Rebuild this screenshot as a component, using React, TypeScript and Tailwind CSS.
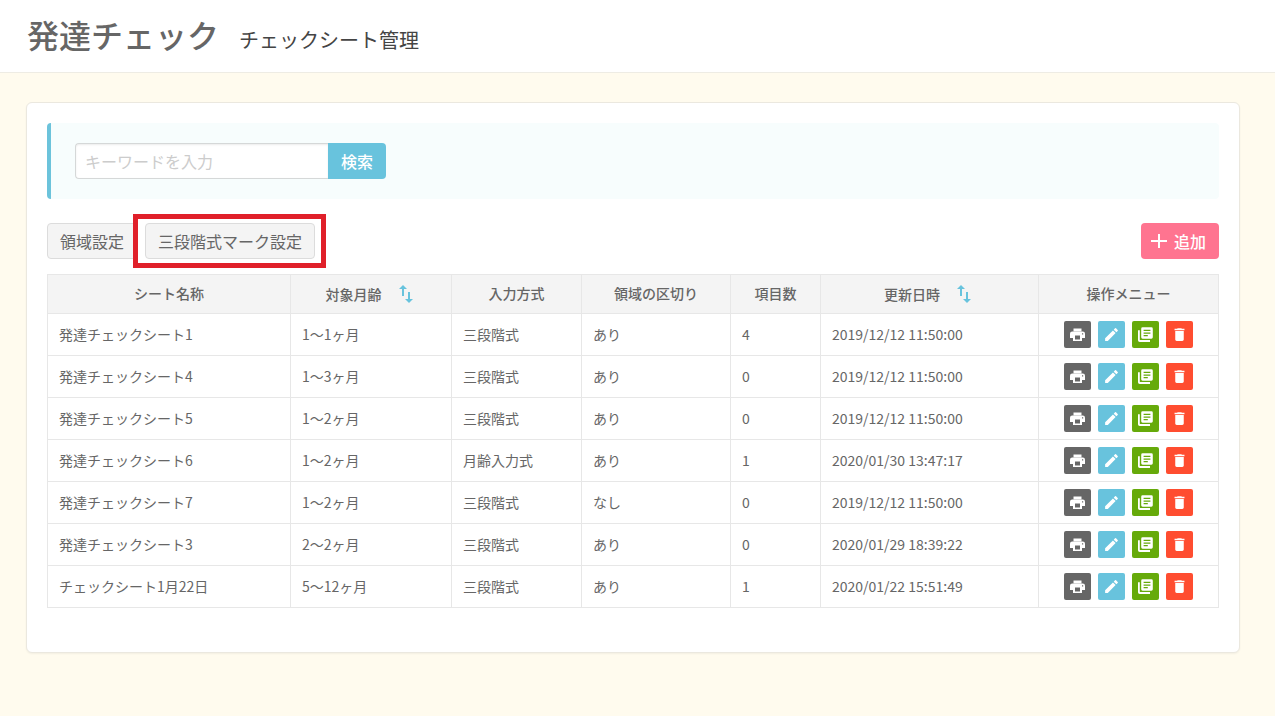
import type { ReactNode } from 'react';
import { MdDelete, MdEdit } from 'react-icons/md';

type Sheet = {
  name: string;
  age: string;
  method: string;
  division: string;
  count: number;
  updated: string;
};

const sheets: Sheet[] = [
  { name: '発達チェックシート1', age: '1～1ヶ月', method: '三段階式', division: 'あり', count: 4, updated: '2019/12/12 11:50:00' },
  { name: '発達チェックシート4', age: '1～3ヶ月', method: '三段階式', division: 'あり', count: 0, updated: '2019/12/12 11:50:00' },
  { name: '発達チェックシート5', age: '1～2ヶ月', method: '三段階式', division: 'あり', count: 0, updated: '2019/12/12 11:50:00' },
  { name: '発達チェックシート6', age: '1～2ヶ月', method: '月齢入力式', division: 'あり', count: 1, updated: '2020/01/30 13:47:17' },
  { name: '発達チェックシート7', age: '1～2ヶ月', method: '三段階式', division: 'なし', count: 0, updated: '2019/12/12 11:50:00' },
  { name: '発達チェックシート3', age: '2～2ヶ月', method: '三段階式', division: 'あり', count: 0, updated: '2020/01/29 18:39:22' },
  { name: 'チェックシート1月22日', age: '5～12ヶ月', method: '三段階式', division: 'あり', count: 1, updated: '2020/01/22 15:51:49' },
];

function PrintIcon() {
  return (
    <svg viewBox="0 0 15 15" className="size-[15px]" fill="currentColor" aria-hidden="true">
      <path d="M3.500 1.500h8v3h-8z" />
      <path
        fillRule="evenodd"
        d="M2.200 4.500h10.600A2.200 2.200 0 0 1 15 6.700V11h-3v3H3v-3H0V6.700a2.200 2.200 0 0 1 2.200-2.200zM5 8.500v4h5v-4zM12 6.200v1.200h1.200V6.200z"
      />
    </svg>
  );
}

function CopyIcon() {
  return (
    <svg viewBox="0 0 15 15" className="size-[15px]" fill="currentColor" aria-hidden="true">
      <path d="M0 3.200h1.800v9.900h10.200V15H1.800A1.800 1.800 0 0 1 0 13.200z" />
      <path
        fillRule="evenodd"
        d="M4.600.3h8.800A1.400 1.400 0 0 1 14.800 1.700v8.600a1.400 1.400 0 0 1-1.400 1.400H4.600a1.400 1.400 0 0 1-1.400-1.400V1.700A1.400 1.400 0 0 1 4.600.3zM5.600 2.800v1.300h6.800V2.800zM5.600 5.400v1.300h6.800V5.400zM5.600 8v1.300h4.200V8z"
      />
    </svg>
  );
}

function PlusIcon() {
  return (
    <svg viewBox="0 0 16 16" className="size-4" stroke="currentColor" strokeWidth="2" aria-hidden="true">
      <path d="M8 1v14M0 8h16" />
    </svg>
  );
}

function SortButton({ label }: { label: string }) {
  return (
    <button type="button" aria-label={label} className="text-[#68c3dd]">
      <svg viewBox="0 0 14 18" className="h-[18px] w-3.5" fill="currentColor" aria-hidden="true">
        <path d="M4 0 8 4H5v7H3V4H0zM9 7h2v7h3l-4 4-4-4h3z" />
      </svg>
    </button>
  );
}

function Heading({ children, sort }: { children: string; sort?: boolean }) {
  return (
    <th scope="col" className="h-[39px] border border-[#e7e7e7] p-0 pb-0.5 text-center font-medium">
      {sort ? (
        <span className="flex items-center justify-center gap-[17px] pt-0.5 pr-1">
          {children}
          <SortButton label={`${children}で並べ替え`} />
        </span>
      ) : (
        children
      )}
    </th>
  );
}

function Cell({ children }: { children: ReactNode }) {
  return <td className="h-[42px] border border-[#e7e7e7] px-[11px] pt-0 pb-0.5">{children}</td>;
}

const actionBase = 'flex size-[27px] items-center justify-center rounded-xs text-white';

export default function App() {
  return (
    <div className="min-h-screen bg-[#fffbee] pb-16 font-['Noto_Sans_CJK_JP',sans-serif] text-[#666]">
      <header className="flex h-[73px] items-baseline gap-5 border-b border-[#eeece4] bg-white px-[27px] pt-2.5">
        <h1 className="text-[32px] leading-[48px] font-medium">発達チェック</h1>
        <p className="text-xl text-[#444]">チェックシート管理</p>
      </header>

      <main className="mt-[29px] mr-[35px] ml-[26px] rounded-md border border-[#ebe8df] bg-white px-5 pt-5 pb-11 shadow-xs">
        <form
          className="flex rounded-sm border-l-4 border-[#6cc3db] bg-[#f7fdfd] px-6 py-5"
          onSubmit={(e) => e.preventDefault()}
        >
          <input
            type="text"
            aria-label="キーワード"
            placeholder="キーワードを入力"
            className="h-9 w-[253px] rounded-l-sm border border-r-0 border-[#d5d8d8] bg-white px-[9px] text-base shadow-[inset_0_1px_2px_rgba(0,0,0,0.08)] placeholder:text-[#ccc]"
          />
          <button type="submit" className="h-9 rounded-r-sm bg-[#68c3dd] px-[13px] text-base font-medium text-white">
            検索
          </button>
        </form>

        <div className="mt-6 flex items-center gap-2">
          <button type="button" className="h-9 rounded-sm border border-[#dcdcdc] bg-[#f4f4f4] px-3 text-base">
            領域設定
          </button>
          <div className="relative">
            <button type="button" className="block h-9 rounded-sm border border-[#dcdcdc] bg-[#f4f4f4] px-3 text-base">
              三段階式マーク設定
            </button>
            <div className="pointer-events-none absolute -inset-y-[9px] -right-[11px] -left-3 border-5 border-[#e0202a]" />
          </div>
          <button
            type="button"
            className="ml-auto flex h-9 items-center gap-[7px] rounded-sm bg-[#ff7490] pr-[13px] pl-2.5 text-base font-medium text-white"
          >
            <PlusIcon />
            追加
          </button>
        </div>

        <table className="mt-[15px] w-full table-fixed border-collapse text-sm">
          <colgroup>
            <col className="w-[243px]" />
            <col className="w-[161px]" />
            <col className="w-[130px]" />
            <col className="w-[149px]" />
            <col className="w-[90px]" />
            <col className="w-[218px]" />
            <col className="w-[180px]" />
          </colgroup>
          <thead className="bg-[#f4f4f4]">
            <tr>
              <Heading>シート名称</Heading>
              <Heading sort>対象月齢</Heading>
              <Heading>入力方式</Heading>
              <Heading>領域の区切り</Heading>
              <Heading>項目数</Heading>
              <Heading sort>更新日時</Heading>
              <Heading>操作メニュー</Heading>
            </tr>
          </thead>
          <tbody>
            {sheets.map((sheet) => (
              <tr key={sheet.name}>
                <Cell>{sheet.name}</Cell>
                <Cell>{sheet.age}</Cell>
                <Cell>{sheet.method}</Cell>
                <Cell>{sheet.division}</Cell>
                <Cell>{sheet.count}</Cell>
                <Cell>{sheet.updated}</Cell>
                <Cell>
                  <div className="flex justify-center gap-[7px] pt-0.5">
                    <button type="button" aria-label="印刷" className={`${actionBase} bg-[#666]`}>
                      <PrintIcon />
                    </button>
                    <button type="button" aria-label="編集" className={`${actionBase} bg-[#68c3dd]`}>
                      <MdEdit className="size-[17px]" />
                    </button>
                    <button type="button" aria-label="複製" className={`${actionBase} bg-[#66aa0a]`}>
                      <CopyIcon />
                    </button>
                    <button type="button" aria-label="削除" className={`${actionBase} bg-[#ff4d30]`}>
                      <MdDelete className="size-[17px]" />
                    </button>
                  </div>
                </Cell>
              </tr>
            ))}
          </tbody>
        </table>
      </main>
    </div>
  );
}
